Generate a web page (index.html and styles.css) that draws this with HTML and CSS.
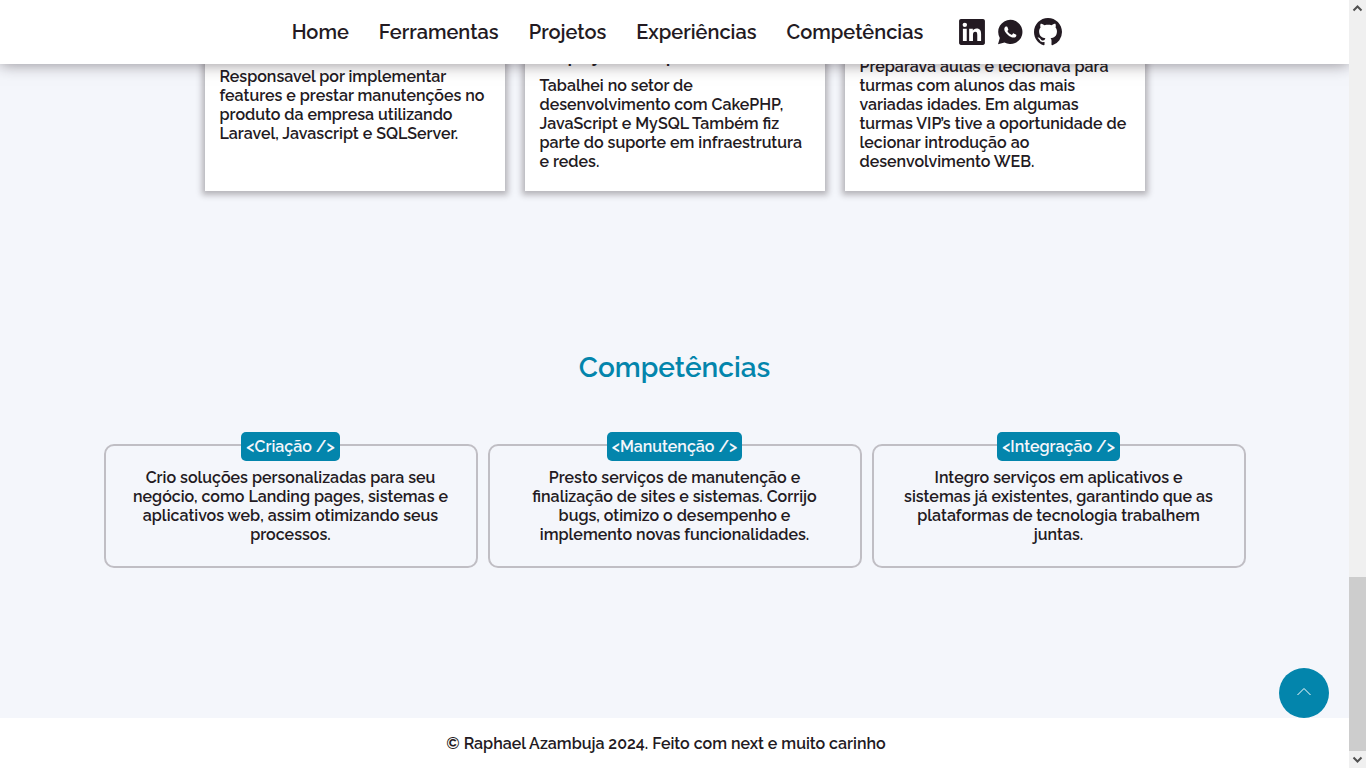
FILE: index.html
```html
<!DOCTYPE html>
<html lang="pt-BR">
<head>
<meta charset="utf-8">
<meta name="viewport" content="width=device-width, initial-scale=1">
<title>Raphael Azambuja</title>
<link rel="stylesheet" href="styles.css">
</head>
<body>
<div class="page">
  <header class="header">
    <nav class="nav">
      <a href="#home">Home</a>
      <a href="#ferramentas">Ferramentas</a>
      <a href="#projetos">Projetos</a>
      <a href="#experiencias">Experiências</a>
      <a href="#competencias">Competências</a>
    </nav>
    <div class="social">
      <a href="#linkedin" aria-label="LinkedIn">
        <svg viewBox="-1 -1 26 26"><path d="M20.447 20.452h-3.554v-5.569c0-1.328-.027-3.037-1.852-3.037-1.853 0-2.136 1.445-2.136 2.939v5.667H9.351V9h3.414v1.561h.046c.477-.9 1.637-1.85 3.37-1.85 3.601 0 4.267 2.37 4.267 5.455v6.286zM5.337 7.433a2.062 2.062 0 0 1-2.063-2.065 2.064 2.064 0 1 1 2.063 2.065zm1.782 13.019H3.555V9h3.564v11.452zM22.225 0H1.771C.792 0 0 .774 0 1.729v20.542C0 23.227.792 24 1.771 24h20.451C23.2 24 24 23.227 24 22.271V1.729C24 .774 23.2 0 22.222 0h.003z"/></svg>
      </a>
      <a href="#whatsapp" aria-label="WhatsApp">
        <svg viewBox="0 0 28 28"><path d="M14.3 1.8a12.1 12.1 0 0 0-10.5 18.1L2 26.2l6.500-1.700A12.100 12.100 0 1 0 14.300 1.800z"/><path class="handset" transform="translate(2.300 2)" d="M17.472 14.382c-.297-.149-1.758-.867-2.03-.967-.273-.099-.471-.148-.67.15-.197.297-.767.966-.94 1.164-.173.199-.347.223-.644.075-.297-.15-1.255-.463-2.39-1.475-.883-.788-1.48-1.761-1.653-2.059-.173-.297-.018-.458.13-.606.134-.133.298-.347.446-.52.149-.174.198-.298.298-.497.099-.198.05-.371-.025-.52-.075-.149-.669-1.612-.916-2.207-.242-.579-.487-.5-.669-.51-.173-.008-.371-.01-.57-.01-.198 0-.52.074-.792.372-.272.297-1.04 1.016-1.04 2.479 0 1.462 1.065 2.875 1.213 3.074.149.198 2.096 3.2 5.077 4.487.709.306 1.262.489 1.694.625.712.227 1.36.195 1.871.118.571-.085 1.758-.719 2.006-1.413.248-.694.248-1.289.173-1.413-.074-.124-.272-.198-.57-.347"/></svg>
      </a>
      <a href="#github" aria-label="GitHub">
        <svg viewBox="0 0 16 16"><path d="M8 0C3.58 0 0 3.58 0 8c0 3.54 2.29 6.53 5.47 7.59.4.07.55-.17.55-.38 0-.19-.01-.82-.01-1.49-2.01.37-2.53-.49-2.69-.94-.09-.23-.48-.94-.82-1.13-.28-.15-.68-.52-.01-.53.63-.01 1.08.58 1.23.82.72 1.21 1.87.87 2.33.66.07-.52.28-.87.51-1.07-1.78-.2-3.64-.89-3.64-3.95 0-.87.31-1.59.82-2.15-.08-.2-.36-1.02.08-2.12 0 0 .67-.21 2.2.82.64-.18 1.32-.27 2-.27s1.36.09 2 .27c1.53-1.04 2.2-.82 2.2-.82.44 1.1.16 1.92.08 2.12.51.56.82 1.27.82 2.15 0 3.07-1.87 3.75-3.65 3.95.29.25.54.73.54 1.48 0 1.07-.01 1.93-.01 2.2 0 .21.15.46.55.38A8.01 8.01 0 0 0 16 8c0-4.42-3.58-8-8-8z"/></svg>
      </a>
    </div>
  </header>

  <main class="main">
    <section class="experiences" id="experiencias">
      <article class="job">
        <p class="job-text job-text-short">Responsavel por implementar features e prestar manutenções no produto da empresa utilizando Laravel, Javascript e SQLServer.</p>
      </article>
      <article class="job">
        <h3 class="job-title">Em projetos e suporte</h3>
        <p class="job-text">Tabalhei no setor de desenvolvimento com CakePHP, JavaScript e MySQL Também fiz parte do suporte em infraestrutura e redes.</p>
      </article>
      <article class="job">
        <p class="job-text">Preparava aulas e lecionava para turmas com alunos das mais variadas idades. Em algumas turmas VIP’s tive a oportunidade de lecionar introdução ao desenvolvimento WEB.</p>
      </article>
    </section>

    <section class="skills" id="competencias">
      <h2 class="skills-title">Competências</h2>
      <div class="skills-list">
        <article class="skill">
          <h3 class="skill-tag">&lt;Criação /&gt;</h3>
          <p class="skill-text">Crio soluções personalizadas para seu negócio, como Landing pages, sistemas e aplicativos web, assim otimizando seus processos.</p>
        </article>
        <article class="skill">
          <h3 class="skill-tag">&lt;Manutenção /&gt;</h3>
          <p class="skill-text">Presto serviços de manutenção e finalização de sites e sistemas. Corrijo bugs, otimizo o desempenho e implemento novas funcionalidades.</p>
        </article>
        <article class="skill">
          <h3 class="skill-tag">&lt;Integração /&gt;</h3>
          <p class="skill-text">Integro serviços em aplicativos e sistemas já existentes, garantindo que as plataformas de tecnologia trabalhem juntas.</p>
        </article>
      </div>
    </section>
  </main>

  <footer class="footer">© Raphael Azambuja 2024. Feito com next e muito carinho</footer>

  <button class="to-top" type="button" aria-label="Voltar ao topo">
    <svg viewBox="0 0 16 16"><path d="M1.500 10 8 3.500 14.500 10"/></svg>
  </button>
</div>

<div class="scrollbar" aria-hidden="true">
  <svg class="scroll-arrow" viewBox="0 0 17 17"><path d="M4.500 10.500 8.500 6.500 12.500 10.500"/></svg>
  <div class="scroll-track"><div class="scroll-thumb"></div></div>
  <svg class="scroll-arrow" viewBox="0 0 17 17"><path d="M4.500 6.500 8.500 10.500 12.500 6.500"/></svg>
</div>
</body>
</html>
```
FILE: styles.css
```css
:root {
  --ink: #231a22;
  --teal: #0385ac;
  --ground: #f4f6fb;
}

* {
  box-sizing: border-box;
  margin: 0;
}

body {
  display: flex;
  height: 100vh;
  overflow: hidden;
  background: var(--ground);
  color: var(--ink);
  font: 600 16px/19px Raleway, Lato, sans-serif;
}

.page {
  position: relative;
  display: flex;
  flex: 1;
  flex-direction: column;
  min-width: 0;
  overflow: hidden;
}

.header {
  position: relative;
  z-index: 1;
  display: flex;
  flex: none;
  align-items: center;
  justify-content: center;
  gap: 35px;
  height: 64px;
  padding-left: 5px;
  background: #fff;
  box-shadow: 0 0 15px rgba(35, 26, 34, 0.5);
}

.nav {
  display: flex;
  gap: 30px;
  font-size: 20px;
  line-height: 24px;
}

.nav a {
  color: inherit;
  text-decoration: none;
}

.social {
  display: flex;
  gap: 10px;
}

.social a,
.social svg {
  display: block;
  width: 28px;
  height: 28px;
  fill: var(--ink);
}

.social .handset {
  fill: #fff;
}

.main {
  display: flex;
  flex: 1;
  flex-direction: column;
  justify-content: flex-end;
  min-height: 0;
  padding-bottom: 150px;
}

.experiences {
  display: flex;
  justify-content: center;
  gap: 20px;
}

.job {
  display: flex;
  flex-direction: column;
  justify-content: flex-end;
  width: 300px;
  min-height: 180px;
  padding: 20px 15px;
  background: #fff;
  box-shadow: 0 1px 6px 3px rgba(35, 26, 34, 0.3);
}

.job-title {
  margin-bottom: 10px;
  font-size: 16px;
  font-weight: 700;
}

.job-text-short {
  min-height: 104px;
}

.skills {
  padding-top: 160px;
}

.skills-title {
  color: var(--teal);
  font-size: 28px;
  font-weight: 600;
  line-height: 33px;
  text-align: center;
}

.skills-list {
  display: grid;
  grid-template-columns: repeat(3, 1fr);
  gap: 10px;
  max-width: 1142px;
  margin: 60px auto 0;
}

.skill {
  display: flex;
  flex-direction: column;
  align-items: center;
  gap: 7px;
  padding: 0 26px 22px;
  border: 2px solid #c0bec4;
  border-radius: 10px;
}

.skill-tag {
  margin-top: -14px;
  padding: 5px;
  border-radius: 5px;
  background: var(--teal);
  color: var(--ground);
  font-size: 16px;
  font-weight: 600;
}

.skill-text {
  text-align: center;
}

.footer {
  flex: none;
  padding: 16px 17px 15px 0;
  background: #fff;
  text-align: center;
}

.to-top {
  position: absolute;
  right: 20px;
  bottom: 50px;
  display: grid;
  place-items: center;
  width: 50px;
  height: 50px;
  padding: 0;
  border: 0;
  border-radius: 50%;
  background: var(--teal);
}

.to-top svg {
  width: 16px;
  height: 16px;
  fill: none;
  stroke: #fff;
}

.scrollbar {
  display: flex;
  flex: none;
  flex-direction: column;
  width: 17px;
  background: #f0f0f0;
}

.scroll-arrow {
  width: 17px;
  height: 17px;
  fill: none;
  stroke: #505050;
  stroke-width: 2;
}

.scroll-track {
  display: grid;
  flex: 1;
  grid-template-rows: 560fr 174fr;
}

.scroll-thumb {
  grid-row: 2;
  background: #cdcdcd;
}
```
